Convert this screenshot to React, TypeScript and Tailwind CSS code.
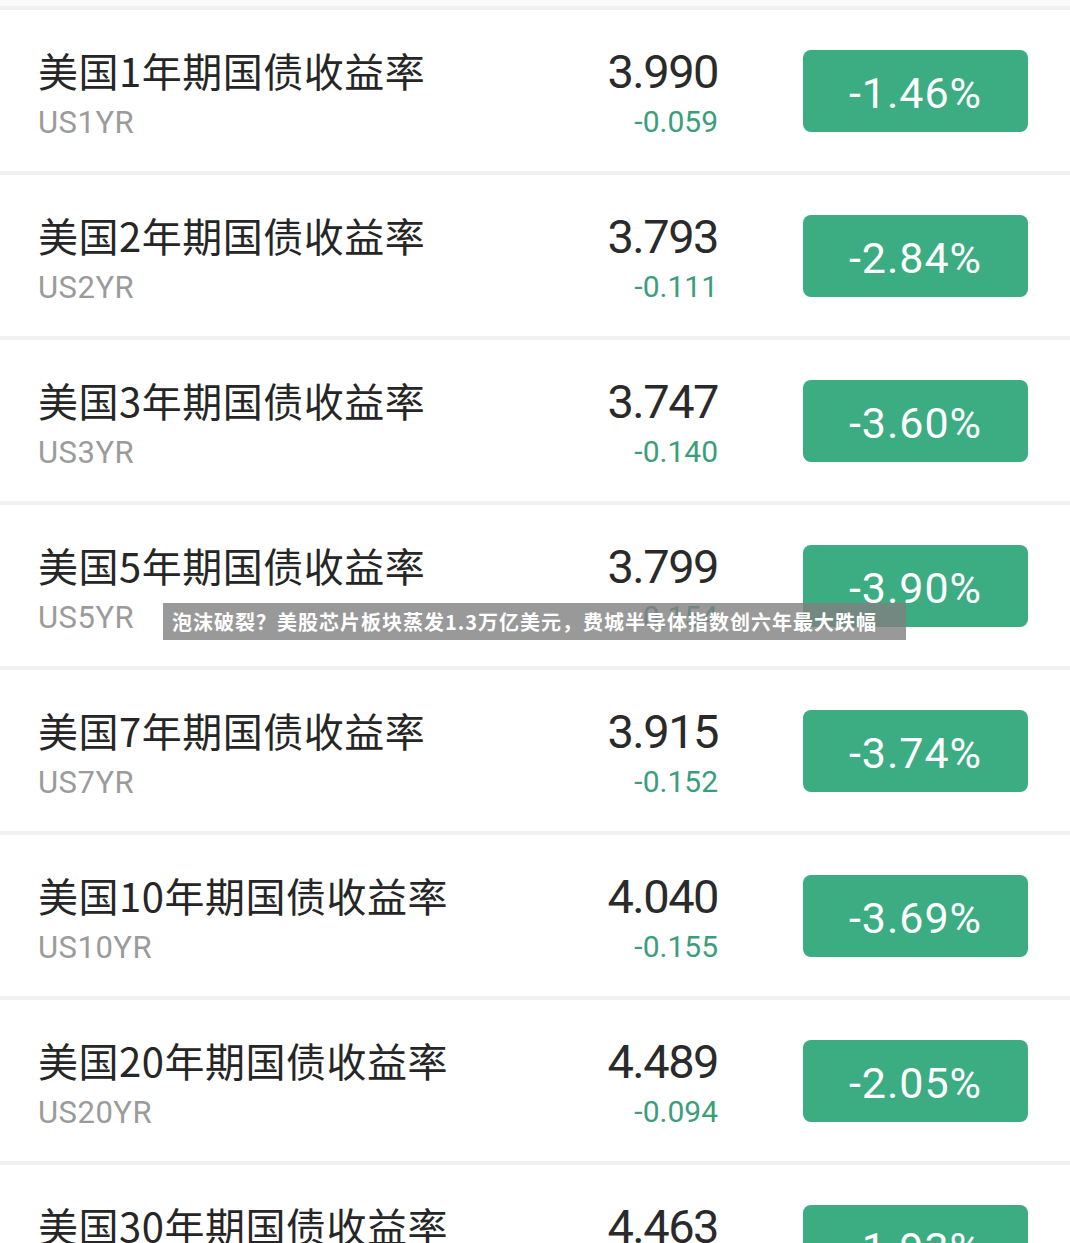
const ROWS = [
  { name: '美国1年期国债收益率', code: 'US1YR', value: '3.990', change: '-0.059', pct: '-1.46%' },
  { name: '美国2年期国债收益率', code: 'US2YR', value: '3.793', change: '-0.111', pct: '-2.84%' },
  { name: '美国3年期国债收益率', code: 'US3YR', value: '3.747', change: '-0.140', pct: '-3.60%' },
  { name: '美国5年期国债收益率', code: 'US5YR', value: '3.799', change: '-0.154', pct: '-3.90%' },
  { name: '美国7年期国债收益率', code: 'US7YR', value: '3.915', change: '-0.152', pct: '-3.74%' },
  { name: '美国10年期国债收益率', code: 'US10YR', value: '4.040', change: '-0.155', pct: '-3.69%' },
  { name: '美国20年期国债收益率', code: 'US20YR', value: '4.489', change: '-0.094', pct: '-2.05%' },
  { name: '美国30年期国债收益率', code: 'US30YR', value: '4.463', change: '-0.087', pct: '-1.93%' },
];

const cjk = "font-['Noto_Sans_CJK_SC',sans-serif]";
const num = "font-['Roboto','Noto_Sans',sans-serif]";

export default function App() {
  return (
    <div className="relative w-[1070px] h-[1243px] overflow-hidden bg-white">
      <div className="h-[6px] bg-[#fafafa]" />
      {ROWS.map((r) => (
        <div
          key={r.code}
          className="flex items-center h-[165px] border-t-[4px] border-[#f1f1f1] pl-[38px] pr-[42px]"
        >
          <div className="flex-1 flex flex-col pt-[6px]">
            <span className={`${cjk} text-[40px] leading-[48px] text-[#262626] tracking-[0.5px]`}>{r.name}</span>
            <span className={`${num} text-[31px] leading-[36px] text-[#9b9b9b] mt-[11px] tracking-[0.5px]`}>{r.code}</span>
          </div>
          <div className="flex flex-col items-end w-[200px]">
            <span className={`${num} text-[47px] leading-[54px] text-[#2a2a2a] tracking-[-1.5px] mt-[4px]`}>{r.value}</span>
            <span className={`${num} text-[30px] leading-[36px] text-[#3a9e7b] mt-[5px]`}>{r.change}</span>
          </div>
          <div className="ml-[85px] w-[225px] h-[82px] rounded-[8px] bg-[#3cac82] flex items-center justify-center pt-[6px]">
            <span className={`${num} text-[43px] text-white tracking-[1px]`}>{r.pct}</span>
          </div>
        </div>
      ))}
      <div className="absolute left-[163px] top-[603px] w-[743px] h-[37px] bg-[#7f7f7f]/80 flex items-center pl-[9px]">
        <span className={`${cjk} text-[20px] font-bold text-white tracking-[1px] whitespace-nowrap`}>
          泡沫破裂？美股芯片板块蒸发1.3万亿美元，费城半导体指数创六年最大跌幅
        </span>
      </div>
    </div>
  );
}
